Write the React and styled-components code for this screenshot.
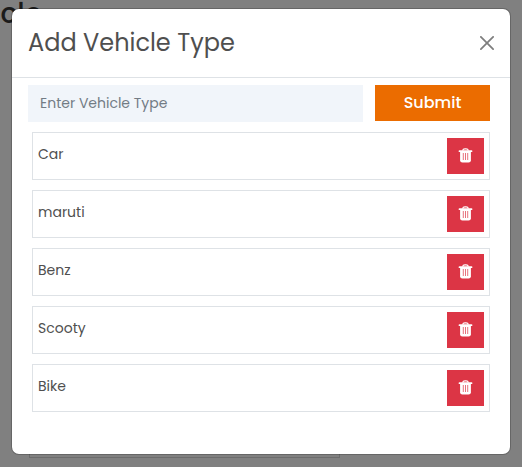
import React from "react";
import styled, { createGlobalStyle } from "styled-components";

const GlobalStyle = createGlobalStyle`
  *, *::before, *::after { box-sizing: border-box; }
  body {
    margin: 0;
    overflow: hidden;
    background: #808080;
    color: #4f4f4f;
    font-family: Poppins, Inter, sans-serif;
  }
  button, input { font-family: inherit; }
`;

const Page = styled.div`
  position: relative;
  height: 467px;
  padding: 8px 11px 12px;
  overflow: hidden;
`;

const PageHeading = styled.h1`
  position: absolute;
  top: -7px;
  right: 480px;
  margin: 0;
  font-size: 28px;
  font-weight: 500;
  line-height: 42px;
  color: #1b1b1b;
`;

const PageField = styled.div`
  position: absolute;
  left: 29px;
  top: 420px;
  width: 311px;
  height: 38px;
  border: 1px solid #6c6c6c;
`;

const Dialog = styled.section`
  position: relative;
  height: 447px;
  background: #fff;
  background-clip: padding-box;
  border: 1px solid rgba(0, 0, 0, 0.2);
  border-radius: 8px;
`;

const Header = styled.header`
  display: flex;
  align-items: center;
  justify-content: space-between;
  height: 69px;
  padding: 0 16px;
  border-bottom: 1px solid #dee2e6;
`;

const Title = styled.h2`
  margin: 0;
  font-size: 24px;
  font-weight: 400;
  line-height: 36px;
`;

const CloseButton = styled.button`
  display: flex;
  padding: 0;
  border: 0;
  background: none;
  color: #000;
  opacity: 0.5;
`;

const Body = styled.div`
  padding: 7px 20px 0 16px;
`;

const Form = styled.form`
  display: flex;
  align-items: flex-start;
  gap: 12px;
  margin-bottom: 10px;
`;

const TypeInput = styled.input`
  width: 335px;
  height: 37px;
  padding: 0 12px;
  border: 0;
  border-radius: 0;
  outline: 0;
  background: #f1f5fa;
  font-size: 14px;
  &::placeholder { color: #737c85; opacity: 1; }
`;

const SubmitButton = styled.button`
  width: 115px;
  height: 36px;
  padding: 0 0 1px;
  border: 0;
  background: #eb6c00;
  color: #fff;
  font-size: 16px;
  font-weight: 500;
`;

const List = styled.ul`
  display: grid;
  gap: 10px;
  margin: 0;
  padding: 0 0 0 4px;
  list-style: none;
`;

const Row = styled.li`
  display: flex;
  align-items: flex-start;
  justify-content: space-between;
  height: 48px;
  padding: 5px;
  border: 1px solid #dee2e6;
`;

const Name = styled.span`
  padding-top: 6px;
  font-size: 14px;
  line-height: 21px;
`;

const DeleteButton = styled.button`
  display: flex;
  align-items: center;
  justify-content: center;
  width: 37px;
  height: 36px;
  padding: 0 0 1px;
  border: 0;
  background: #dc3545;
  color: #fff;
`;

const TrashIcon = () => (
  <svg width="15" height="15" viewBox="0 0 15 15" fill="none" stroke="currentColor">
    <path d="M4.6 2.6C4.9 1.3 5.7.8 6.9.8h1.2c1.2 0 2 .5 2.3 1.8" strokeWidth="1.3" />
    <path d="M1.5 3.2h12" strokeWidth="1.8" strokeLinecap="round" />
    <path d="M2.1 3.5h10.8v8.8a2.3 2.3 0 0 1-2.3 2.3H4.4a2.3 2.3 0 0 1-2.3-2.3z" fill="currentColor" stroke="none" />
    <path d="M5.3 5v7M7.5 5v7M9.7 5v7" stroke="#dc3545" strokeWidth="0.7" />
  </svg>
);

const vehicles = ["Car", "maruti", "Benz", "Scooty", "Bike"];

export default function App() {
  return (
    <>
      <GlobalStyle />
      <Page>
        <PageHeading>icle</PageHeading>
        <PageField />
        <Dialog>
          <Header>
            <Title>Add Vehicle Type</Title>
            <CloseButton aria-label="Close">
              <svg width="14" height="14" viewBox="0 0 16 16" fill="currentColor">
                <path d="M.293.293a1 1 0 0 1 1.414 0L8 6.586 14.293.293a1 1 0 1 1 1.414 1.414L9.414 8l6.293 6.293a1 1 0 0 1-1.414 1.414L8 9.414l-6.293 6.293a1 1 0 0 1-1.414-1.414L6.586 8 .293 1.707a1 1 0 0 1 0-1.414z" />
              </svg>
            </CloseButton>
          </Header>
          <Body>
            <Form>
              <TypeInput placeholder="Enter Vehicle Type" />
              <SubmitButton type="button">Submit</SubmitButton>
            </Form>
            <List>
              {vehicles.map((name) => (
                <Row key={name}>
                  <Name>{name}</Name>
                  <DeleteButton aria-label={`Delete ${name}`}>
                    <TrashIcon />
                  </DeleteButton>
                </Row>
              ))}
            </List>
          </Body>
        </Dialog>
      </Page>
    </>
  );
}
